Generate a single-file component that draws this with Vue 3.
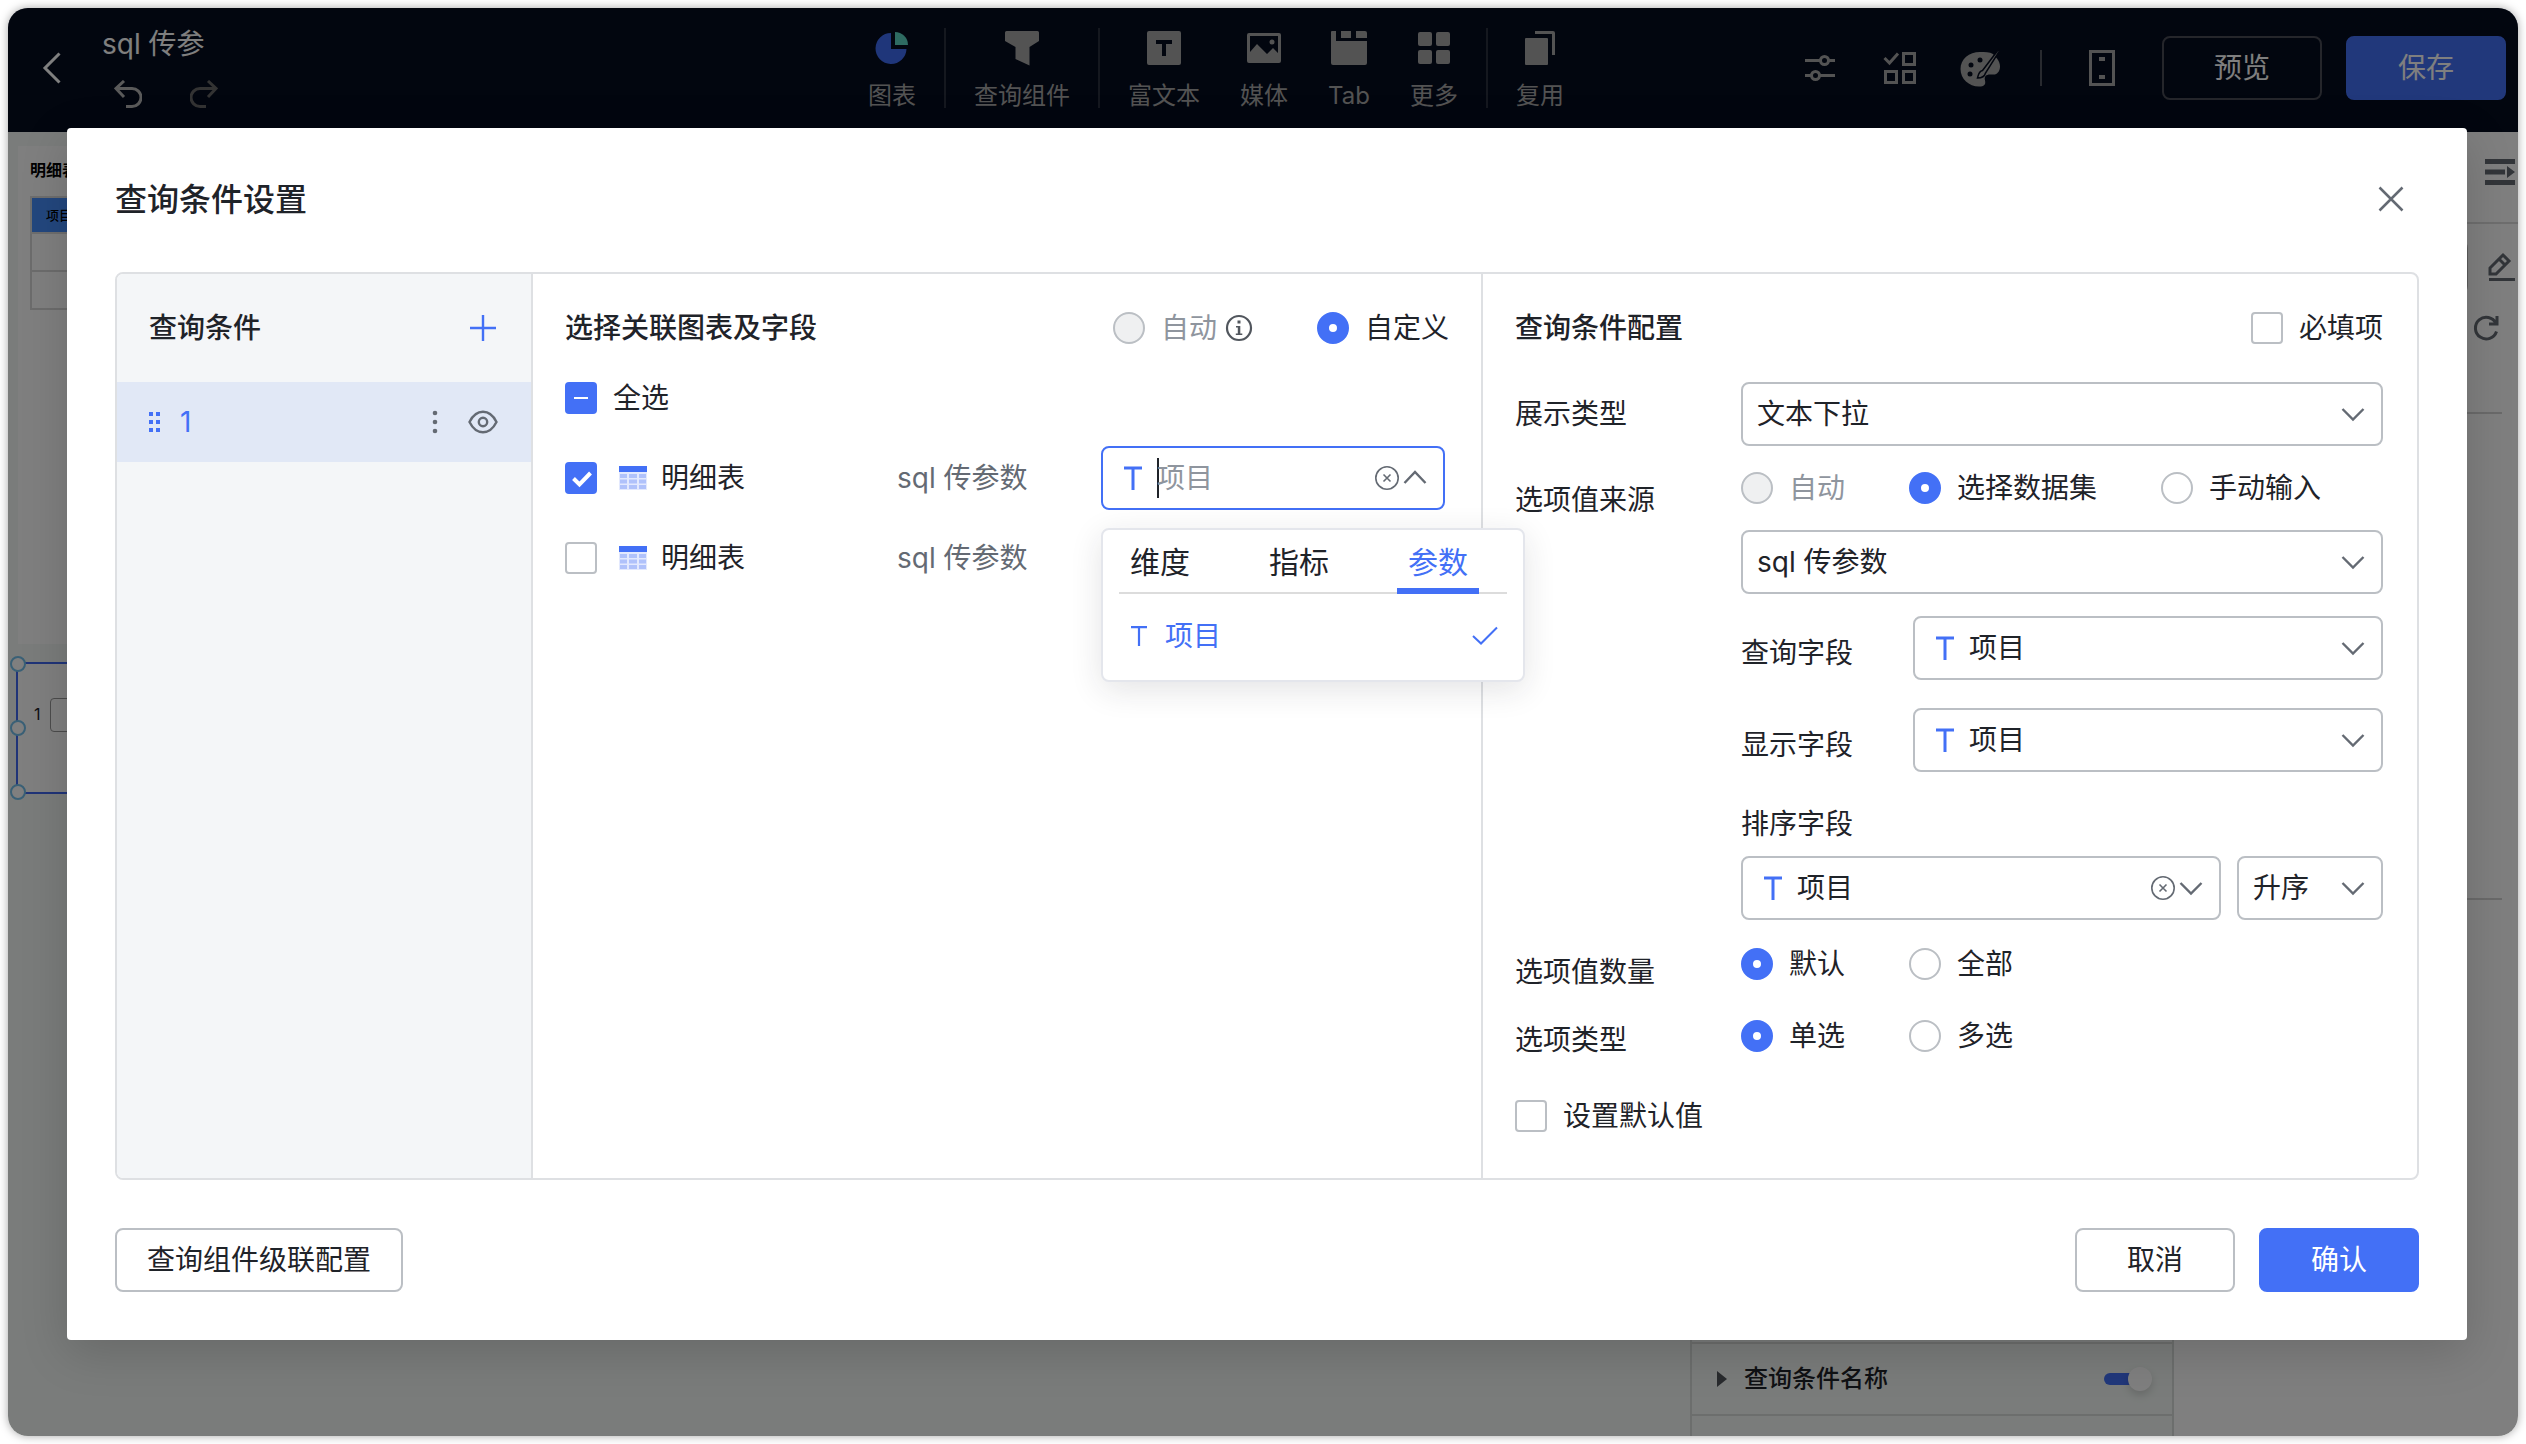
<script setup>
import { ref } from 'vue'

const title = 'sql 传参'
const fieldTabs = ['维度', '指标', '参数']
const activeTab = ref('参数')
const linkMode = ref('custom')
const optionSource = ref('dataset')
const optionAmount = ref('default')
const optionKind = ref('single')
const charts = ref([
  { id: 1, name: '明细表', dataset: 'sql 传参数', checked: true, open: true },
  { id: 2, name: '明细表', dataset: 'sql 传参数', checked: false, open: false }
])
const keyword = ref('')
const required = ref(false)
const useDefault = ref(false)
</script>

<template>
  <div class="frame">
    <div class="page">
      <header class="topbar">
        <div class="topbar-left">
          <button class="icon-btn" aria-label="返回">
            <svg width="32" height="40" viewBox="0 0 32 40"><path d="M23.500 5.500 9 20l14.500 14.500" fill="none" stroke="#fff" stroke-width="3" /></svg>
          </button>
          <div class="doc">
            <div class="doc-title">{{ title }}</div>
            <div class="history">
              <button class="icon-btn undo" aria-label="撤销">
                <svg width="28" height="28" viewBox="0 0 28 28"><path d="M10 1 2 8.500 10 17M3 8.500h15a9 9 0 0 1 0 18h-6" /></svg>
              </button>
              <button class="icon-btn redo" aria-label="重做">
                <svg width="28" height="28" viewBox="0 0 28 28"><path d="m18 1 8 7.500L18 17M25 8.500H10a9 9 0 0 0 0 18h6" /></svg>
              </button>
            </div>
          </div>
        </div>

        <nav class="tools">
          <button class="tool">
            <svg width="40" height="40" viewBox="0 0 40 40">
              <path d="M19 5A15.500 15.500 0 1 0 34.500 21H19Z" fill="#3f6cf5" />
              <path d="M23 4a13 13 0 0 1 13 13H23Z" fill="#5cd6c4" />
            </svg>
            <span>图表</span>
          </button>
          <i class="bar"></i>
          <button class="tool">
            <svg width="40" height="40" viewBox="0 0 40 40"><path d="M4.500 3h31a1.500 1.500 0 0 1 1.500 1.500V13L27.500 19v18.500L13.500 31V19L3 13V4.500A1.500 1.500 0 0 1 4.500 3Z" /></svg>
            <span>查询组件</span>
          </button>
          <i class="bar"></i>
          <div class="tool-group">
            <button class="tool">
              <svg width="40" height="40" viewBox="0 0 40 40"><path fill-rule="evenodd" d="M5 3h30a2 2 0 0 1 2 2v30a2 2 0 0 1-2 2H5a2 2 0 0 1-2-2V5a2 2 0 0 1 2-2Zm7 9v4h6v12h4V16h6v-4Z" /></svg>
              <span>富文本</span>
            </button>
            <button class="tool">
              <svg width="40" height="40" viewBox="0 0 40 40">
                <path fill-rule="evenodd" d="M5 5h30a2 2 0 0 1 2 2v26a2 2 0 0 1-2 2H5a2 2 0 0 1-2-2V7a2 2 0 0 1 2-2Zm1 3v16l7-8 10 10 6-6 5 5V8Z" />
                <circle cx="28" cy="14" r="2.500" />
              </svg>
              <span>媒体</span>
            </button>
            <button class="tool">
              <svg width="40" height="40" viewBox="0 0 40 40"><path d="M3 3h4v10h31v22a2 2 0 0 1-2 2H4a2 2 0 0 1-2-2V4a1 1 0 0 1 1-1ZM12 3h10v7H12ZM27 3h9a2 2 0 0 1 2 2v5H27Z" /></svg>
              <span>Tab</span>
            </button>
            <button class="tool">
              <svg width="40" height="40" viewBox="0 0 40 40">
                <rect x="4" y="4" width="14" height="14" rx="2" /><rect x="22" y="4" width="14" height="14" rx="2" />
                <rect x="4" y="22" width="14" height="14" rx="2" /><rect x="22" y="22" width="14" height="14" rx="2" />
              </svg>
              <span>更多</span>
            </button>
          </div>
          <i class="bar"></i>
          <button class="tool">
            <svg width="40" height="40" viewBox="0 0 40 40"><rect x="5" y="10" width="23" height="27" rx="1" /><path d="M15 3h18a2 2 0 0 1 2 2v22h-3V6H15Z" /></svg>
            <span>复用</span>
          </button>
        </nav>

        <div class="topbar-right">
          <button class="icon-btn" aria-label="全局参数">
            <svg width="40" height="40" viewBox="0 0 40 40" fill="none" stroke="#a6a6a6" stroke-width="3"><path d="M5 12.500h15m9 0h6M5 27.500h6m9 0h15" /><circle cx="24.500" cy="12.500" r="4" /><circle cx="15.500" cy="27.500" r="4" /></svg>
          </button>
          <button class="icon-btn" aria-label="批量操作">
            <svg width="40" height="40" viewBox="0 0 40 40" fill="none" stroke="#a6a6a6" stroke-width="3"><path d="m4.500 10 5 5 8.500-9.500" /><rect x="23.500" y="5.500" width="11" height="11" /><rect x="5.500" y="23.500" width="11" height="11" /><rect x="23.500" y="23.500" width="11" height="11" /></svg>
          </button>
          <button class="icon-btn" aria-label="主题样式">
            <svg width="40" height="40" viewBox="0 0 40 40">
              <path d="M20 4C9 4 .500 11 .500 21S9 38.500 19 38.500c5 0 7-2 6-6-1-4 1-6 5-6h5c3-1 5-4 5-8 0-3-1-5-3-8L33 6C29.500 4 25 4 20 4Z" fill="#a6a6a6" />
              <g fill="#050c1e"><circle cx="10" cy="26" r="2.500" /><circle cx="11" cy="17" r="2.500" /><circle cx="20" cy="12" r="2.500" /></g>
              <path d="M38.500 1.500 22.500 22.500c-4 1-4 4-5 7.500 4 0 7-1 8-5L39.500 3Z" fill="#a6a6a6" stroke="#050c1e" stroke-width="1.500" />
            </svg>
          </button>
          <i class="mini-bar"></i>
          <button class="icon-btn" aria-label="移动端">
            <svg width="40" height="40" viewBox="0 0 40 40"><rect x="8.500" y="3.500" width="23" height="33" fill="none" stroke="#a6a6a6" stroke-width="3" /><path d="M17 9h6v4h-6zm0 18h6v4h-6z" fill="#a6a6a6" /></svg>
          </button>
          <div class="actions">
            <button class="btn dark">预览</button>
            <button class="btn primary">保存</button>
          </div>
        </div>
      </header>

      <div class="workspace">
        <main class="canvas">
          <section class="card">
            <h3>明细表</h3>
            <table class="detail">
              <thead><tr><th>项目</th></tr></thead>
              <tbody><tr><td></td></tr><tr><td></td></tr></tbody>
            </table>
          </section>
          <section class="widget">
            <i class="handle top"></i><i class="handle mid"></i><i class="handle bottom"></i>
            <label for="widget-query">1</label>
            <input id="widget-query" type="text" />
          </section>
        </main>
        <aside class="props">
          <div class="prop-row">
            <svg width="12" height="16" viewBox="0 0 12 16"><path d="M1 0 11 8 1 16Z" fill="#51555b" /></svg>
            <label for="show-name">查询条件名称</label>
            <input id="show-name" type="checkbox" class="switch" checked />
          </div>
          <div class="prop-tail"></div>
        </aside>
        <aside class="fields">
          <div class="fields-head">
            <svg width="30" height="28" viewBox="0 0 30 28" fill="#646a73"><path d="M0 1h30v5H0zM0 11.500h20v5H0zM0 22h30v5H0zM22 8l8 6-8 6z" /></svg>
          </div>
          <div class="fields-set">
            <input type="text" aria-label="数据集" />
            <svg width="30" height="30" viewBox="0 0 30 30" fill="none" stroke="#646a73" stroke-width="3"><path d="M3 27.500h26M4 16 17 3l6 6-13 13H4ZM13 7l6 6" /></svg>
          </div>
          <div class="fields-refresh">
            <svg width="28" height="28" viewBox="0 0 28 28" fill="none" stroke="#646a73" stroke-width="3"><path d="M24.500 17.500A10.800 10.800 0 1 1 24 9.500M25 2v8h-8" /></svg>
          </div>
          <hr class="line-a" />
          <hr class="line-b" />
        </aside>
      </div>
    </div>

    <div class="mask">
      <div class="modal" role="dialog" aria-labelledby="modal-title">
        <header class="modal-head">
          <h2 id="modal-title">查询条件设置</h2>
          <button class="close" aria-label="关闭">
            <svg width="28" height="28" viewBox="0 0 28 28"><path d="m2.500 2.500 23 23m0-23-23 23" fill="none" stroke="#646a73" stroke-width="2.500" /></svg>
          </button>
        </header>

        <div class="panel">
          <section class="col-list">
            <div class="list-head">
              <h3>查询条件</h3>
              <button class="icon-btn" aria-label="添加">
                <svg width="32" height="32" viewBox="0 0 32 32"><path d="M16 3v26M3 16h26" stroke="#4370f6" stroke-width="2.400" /></svg>
              </button>
            </div>
            <div class="list-item">
              <svg width="12" height="20" viewBox="0 0 12 20" fill="#4370f6"><path d="M0 0h4v4H0zM7 0h4v4H7zM0 8h4v4H0zM7 8h4v4H7zM0 16h4v4H0zM7 16h4v4H7z" /></svg>
              <span class="item-name">1</span>
              <button class="icon-btn" aria-label="更多操作">
                <svg width="32" height="32" viewBox="0 0 32 32" fill="#646a73"><circle cx="16" cy="7" r="2.300" /><circle cx="16" cy="16" r="2.300" /><circle cx="16" cy="25" r="2.300" /></svg>
              </button>
              <button class="icon-btn" aria-label="显示">
                <svg width="32" height="32" viewBox="0 0 32 32" fill="none" stroke="#646a73" stroke-width="2.400"><path d="M2.500 16C6 9 10.500 5.800 16 5.800S26 9 29.500 16C26 23 21.500 26.200 16 26.200S6 23 2.500 16Z" /><circle cx="16" cy="16" r="4.200" /></svg>
              </button>
            </div>
          </section>

          <section class="col-charts">
            <div class="section-head">
              <h3>选择关联图表及字段</h3>
              <div class="radios">
                <label class="choice off">
                  <input v-model="linkMode" type="radio" name="link" value="auto" disabled />自动
                  <svg class="info" width="28" height="28" viewBox="0 0 28 28"><circle cx="14" cy="14" r="12" fill="none" stroke="#51565d" stroke-width="2.200" /><path d="M12.500 6.500h3v3h-3zM11 12h4.300v7.500h2V21h-6.500v-1.500h2V13.500H11z" fill="#51565d" /></svg>
                </label>
                <label class="choice"><input v-model="linkMode" type="radio" name="link" value="custom" />自定义</label>
              </div>
            </div>
            <label class="choice all-row"><input type="checkbox" :indeterminate="true" />全选</label>
            <div v-for="chart in charts" :key="chart.id" class="chart-row">
              <label class="choice chart-name">
                <input v-model="chart.checked" type="checkbox" />
                <svg width="28" height="24" viewBox="0 0 28 24">
                  <path d="M0 0h28v24H0z" fill="#e3e9fe" /><path d="M0 0h28v6H0z" fill="#4370f6" />
                  <path d="M1 8h7v4H1zM10 8h8v4h-8zM20 8h7v4h-7zM1 13.500h7v4H1zM10 13.500h8v4h-8zM20 13.500h7v4h-7zM1 19h7v4H1zM10 19h8v4h-8zM20 19h7v4h-7z" fill="#b0c2fb" />
                </svg>
                <span>{{ chart.name }}</span>
              </label>
              <span class="dataset">{{ chart.dataset }}</span>
              <div v-if="chart.open" class="picker">
                <div class="box active with-icon">
                  <svg class="t" width="24" height="24" viewBox="0 0 24 24"><path d="M3 2h18M12 2v22" fill="none" stroke="#4370f6" stroke-width="3" /></svg>
                  <i class="caret"></i>
                  <input v-model="keyword" type="text" placeholder="项目" aria-label="关联字段" />
                  <svg class="clear" width="24" height="24" viewBox="0 0 24 24"><circle cx="12" cy="12" r="11.200" /><path d="m8.500 8.500 7 7m0-7-7 7" /></svg>
                  <svg class="arrow" width="24" height="24" viewBox="0 0 24 24"><path d="m1.500 17 10.500-11 10.500 11" /></svg>
                </div>
                <div class="popup">
                  <div class="tabs" role="tablist">
                    <button v-for="tab in fieldTabs" :key="tab" role="tab" :class="['tab', { on: tab === activeTab }]" @click="activeTab = tab">{{ tab }}</button>
                  </div>
                  <button class="option">
                    <svg width="16" height="20" viewBox="0 0 16 20"><path d="M0 1.200h16M8 1v19" fill="none" stroke="#4370f6" stroke-width="2.200" /></svg>
                    <span>项目</span>
                    <svg width="26" height="20" viewBox="0 0 26 20"><path d="m1 10 8 7.500L25 1.500" fill="none" stroke="#4370f6" stroke-width="2" /></svg>
                  </button>
                </div>
              </div>
            </div>
          </section>

          <section class="col-config">
            <div class="section-head">
              <h3>查询条件配置</h3>
              <label class="choice"><input v-model="required" type="checkbox" />必填项</label>
            </div>

            <div class="form-row center">
              <label for="show-type">展示类型</label>
              <div class="box">
                <select id="show-type"><option>文本下拉</option></select>
                <svg class="arrow" width="24" height="24" viewBox="0 0 24 24"><path d="m1.500 7 10.500 10.500L22.500 7" /></svg>
              </div>
            </div>

            <div class="form-row source">
              <span class="form-label">选项值来源</span>
              <div>
                <div class="radios">
                  <label class="choice off"><input v-model="optionSource" type="radio" name="source" value="auto" disabled />自动</label>
                  <label class="choice"><input v-model="optionSource" type="radio" name="source" value="dataset" />选择数据集</label>
                  <label class="choice"><input v-model="optionSource" type="radio" name="source" value="manual" />手动输入</label>
                </div>
                <div class="box dataset-box">
                  <select aria-label="数据集"><option>sql 传参数</option></select>
                  <svg class="arrow" width="24" height="24" viewBox="0 0 24 24"><path d="m1.500 7 10.500 10.500L22.500 7" /></svg>
                </div>
                <div class="sub-row first">
                  <label for="query-field">查询字段</label>
                  <div class="box with-icon">
                    <svg class="t" width="24" height="24" viewBox="0 0 24 24"><path d="M3 2h18M12 2v22" fill="none" stroke="#4370f6" stroke-width="3" /></svg>
                    <select id="query-field"><option>项目</option></select>
                    <svg class="arrow" width="24" height="24" viewBox="0 0 24 24"><path d="m1.500 7 10.500 10.500L22.500 7" /></svg>
                  </div>
                </div>
                <div class="sub-row">
                  <label for="show-field">显示字段</label>
                  <div class="box with-icon">
                    <svg class="t" width="24" height="24" viewBox="0 0 24 24"><path d="M3 2h18M12 2v22" fill="none" stroke="#4370f6" stroke-width="3" /></svg>
                    <select id="show-field"><option>项目</option></select>
                    <svg class="arrow" width="24" height="24" viewBox="0 0 24 24"><path d="m1.500 7 10.500 10.500L22.500 7" /></svg>
                  </div>
                </div>
                <label class="sort-label" for="sort-field">排序字段</label>
                <div class="sort-row">
                  <div class="box with-icon">
                    <svg class="t" width="24" height="24" viewBox="0 0 24 24"><path d="M3 2h18M12 2v22" fill="none" stroke="#4370f6" stroke-width="3" /></svg>
                    <select id="sort-field"><option>项目</option></select>
                    <svg class="clear" width="24" height="24" viewBox="0 0 24 24"><circle cx="12" cy="12" r="11.200" /><path d="m8.500 8.500 7 7m0-7-7 7" /></svg>
                    <svg class="arrow" width="24" height="24" viewBox="0 0 24 24"><path d="m1.500 7 10.500 10.500L22.500 7" /></svg>
                  </div>
                  <div class="box order">
                    <select aria-label="排序方式"><option>升序</option></select>
                    <svg class="arrow" width="24" height="24" viewBox="0 0 24 24"><path d="m1.500 7 10.500 10.500L22.500 7" /></svg>
                  </div>
                </div>
              </div>
            </div>

            <div class="form-row amount">
              <span class="form-label">选项值数量</span>
              <div class="radios">
                <label class="choice"><input v-model="optionAmount" type="radio" name="amount" value="default" />默认</label>
                <label class="choice"><input v-model="optionAmount" type="radio" name="amount" value="all" />全部</label>
              </div>
            </div>
            <div class="form-row kind">
              <span class="form-label">选项类型</span>
              <div class="radios">
                <label class="choice"><input v-model="optionKind" type="radio" name="kind" value="single" />单选</label>
                <label class="choice"><input v-model="optionKind" type="radio" name="kind" value="multi" />多选</label>
              </div>
            </div>
            <label class="choice default-row"><input v-model="useDefault" type="checkbox" />设置默认值</label>
          </section>
        </div>

        <footer class="modal-foot">
          <button class="btn cascade">查询组件级联配置</button>
          <div class="actions">
            <button class="btn">取消</button>
            <button class="btn primary">确认</button>
          </div>
        </footer>
      </div>
    </div>
  </div>
</template>

<style>
body {
  background: #fff;
}
</style>

<style scoped>
* {
  box-sizing: border-box;
}
.frame {
  display: grid;
  min-height: calc(100vh - 16px);
  margin: 8px;
  border-radius: 20px;
  overflow: hidden;
  box-shadow: 0 0 10px rgba(0, 0, 0, 0.35);
  font: 400 28px/44px Inter, "Noto Sans CJK SC", sans-serif;
  color: #1f2329;
}
.page,
.mask {
  grid-area: 1 / 1;
  min-width: 0;
}
.page {
  display: flex;
  flex-direction: column;
}
h2,
h3 {
  margin: 0;
  font-weight: 500;
}
h2 {
  padding-top: 2px;
  font-size: 32px;
}
h3 {
  font-size: 28px;
}
svg {
  display: block;
  flex: none;
}
button,
input,
select {
  font: inherit;
  color: inherit;
  margin: 0;
}
button {
  padding: 0;
  border: 0;
  background: none;
  cursor: pointer;
}

/* top bar */
.topbar {
  display: grid;
  grid-template-columns: 832fr auto 942fr;
  align-items: center;
  height: 124px;
  padding: 0 12px 4px 28px;
  background: #050c1e;
}
.topbar-left,
.topbar-right,
.tools,
.tool-group,
.actions,
.history {
  display: flex;
  align-items: center;
}
.topbar-left {
  gap: 34px;
}
.doc-title {
  line-height: 32px;
  color: #fff;
}
.history {
  gap: 48px;
  margin-top: 20px;
  padding-left: 12px;
}
.history svg {
  fill: none;
  stroke: #b4b4b4;
  stroke-width: 3;
}
.history .redo svg {
  stroke: #666;
}
.tools {
  gap: 28px;
}
.tool-group {
  gap: 40px;
}
.tool {
  display: flex;
  flex-direction: column;
  align-items: center;
  gap: 14px;
  padding-top: 2px;
  font-size: 24px;
  line-height: 28px;
  color: #a6a6a6;
  fill: #a6a6a6;
  white-space: nowrap;
}
.bar {
  width: 2px;
  height: 80px;
  background: #2b303e;
}
.mini-bar {
  width: 2px;
  height: 36px;
  background: #50545e;
}
.topbar-right {
  justify-content: flex-end;
  gap: 40px;
}
.actions {
  gap: 24px;
}
.btn {
  min-width: 160px;
  height: 64px;
  border: 2px solid #bbbfc4;
  border-radius: 8px;
  background: #fff;
}
.btn.primary {
  border-color: #4370f6;
  background: #4370f6;
  color: #fff;
}
.btn.dark {
  border-color: #4a4d57;
  background: transparent;
  color: #fff;
}

/* page behind the dialog */
.workspace {
  flex: 1;
  display: flex;
  background: #f4f9f6;
}
.canvas {
  flex: 1;
  padding: 14px 10px 0;
}
.card {
  height: 498px;
  padding: 14px 12px;
  background: #fff;
}
.card h3 {
  font-size: 16px;
  line-height: 20px;
  font-weight: 700;
  color: #000;
}
.detail {
  width: 100%;
  margin-top: 16px;
  border-collapse: collapse;
  font-size: 13px;
  line-height: 20px;
  color: #000;
}
.detail th {
  height: 36px;
  padding: 0 14px;
  text-align: left;
  font-weight: 500;
  background: #478ffd;
  border: 2px solid #ddd;
}
.detail td {
  height: 38px;
  border: 2px solid #d8d8d8;
}
.widget {
  position: relative;
  display: flex;
  align-items: flex-start;
  gap: 9px;
  height: 132px;
  margin: 18px 0 0 -2px;
  padding: 34px 16px;
  border: 2px solid #4068f0;
  background: #fff;
  font-size: 16px;
  line-height: 32px;
}
.widget input {
  flex: 1;
  height: 34px;
  border: 1px solid #999;
  border-radius: 4px;
  background: #fff;
}
.handle {
  position: absolute;
  left: -8px;
  width: 16px;
  height: 16px;
  border: 2px solid #74c0ec;
  border-radius: 50%;
  background: #fff;
}
.handle.top {
  top: -8px;
}
.handle.mid {
  top: 56px;
}
.handle.bottom {
  bottom: -8px;
}
.props {
  width: 484px;
  display: flex;
  flex-direction: column;
  justify-content: flex-end;
  border: solid #d8dcda;
  border-width: 0 2px;
}
.prop-row {
  display: flex;
  align-items: center;
  gap: 16px;
  height: 74px;
  padding: 0 24px;
  border: solid #d8dcda;
  border-width: 2px 0;
  font-size: 24px;
  font-weight: 500;
}
.prop-tail {
  height: 20px;
}
.switch {
  position: relative;
  appearance: none;
  width: 44px;
  height: 12px;
  margin-left: auto;
  border-radius: 6px;
  background: #4370f6;
}
.switch::after {
  content: "";
  position: absolute;
  right: -4px;
  top: -6px;
  width: 24px;
  height: 24px;
  border-radius: 50%;
  background: #fff;
  box-shadow: 0 4px 8px rgba(0, 0, 0, 0.15);
}
.fields {
  width: 344px;
  background: #fff;
}
.fields-head {
  display: flex;
  justify-content: flex-end;
  align-items: center;
  height: 92px;
  padding: 0 3px 10px 0;
  border-bottom: 2px solid #dcdcdc;
}
.fields-set {
  display: flex;
  align-items: center;
  gap: 18px;
  padding: 16px 2px 0 16px;
}
.fields-set input {
  flex: 1;
  min-width: 0;
  height: 54px;
  border: 2px solid #bbb;
  border-radius: 8px;
}
.fields-refresh {
  display: flex;
  justify-content: flex-end;
  margin: 20px 18px 0 0;
}
.fields hr {
  height: 2px;
  margin: 0 16px;
  border: 0;
  background: #d4d4d4;
}
.fields .line-a {
  margin-top: 70px;
}
.fields .line-b {
  margin-top: 484px;
}

/* dialog */
.mask {
  position: relative;
  display: flex;
  padding: 120px 51px 96px 59px;
  background: rgba(0, 0, 0, 0.5);
}
.modal {
  flex: 1;
  min-width: 0;
  display: flex;
  flex-direction: column;
  padding: 48px;
  border-radius: 4px;
  background: #fff;
  box-shadow: 0 12px 48px rgba(0, 0, 0, 0.16);
}
.modal-head,
.modal-foot,
.section-head,
.list-head {
  display: flex;
  align-items: center;
  justify-content: space-between;
}
.close {
  display: flex;
  justify-content: center;
  width: 56px;
}
.panel {
  flex: 1;
  display: grid;
  grid-template-columns: 416px minmax(0, 950fr) minmax(0, 934fr);
  margin: 50px 0 48px;
  border: 2px solid #dee0e3;
  border-radius: 8px;
}
.list-head,
.section-head {
  height: 108px;
}
.col-list {
  border-right: 2px solid #dee0e3;
  border-radius: 6px 0 0 6px;
  background: #f4f6f8;
}
.list-head {
  padding: 0 32px;
}
.list-item {
  display: flex;
  align-items: center;
  gap: 16px;
  height: 80px;
  padding: 0 32px;
  background: #e1e8f6;
}
.item-name {
  flex: 1;
  padding-left: 3px;
  color: #4370f6;
}
.col-charts {
  border-right: 2px solid #dee0e3;
  padding: 0 32px;
}
.radios {
  display: flex;
  gap: 64px;
}
.choice {
  display: flex;
  align-items: center;
  gap: 16px;
  white-space: nowrap;
}
.choice.off {
  color: #8f959e;
}
.info {
  margin-left: -8px;
}
.choice input {
  flex: none;
  appearance: none;
  width: 32px;
  height: 32px;
  border: 2px solid #bbbfc4;
  background: #fff;
}
.choice input[type="radio"] {
  border-radius: 50%;
}
.choice input[type="radio"]:checked {
  border: 12px solid #4370f6;
}
.choice input[type="radio"]:disabled {
  background: #eff0f1;
}
.choice input[type="checkbox"] {
  border-radius: 4px;
}
.choice input[type="checkbox"]:checked,
.choice input[type="checkbox"]:indeterminate {
  border: 0;
  background-color: #4370f6;
}
.choice input[type="checkbox"]:checked {
  background-image: url("data:image/svg+xml,%3Csvg xmlns='http://www.w3.org/2000/svg' viewBox='0 0 32 32'%3E%3Cpath d='M8.500 16.500l6 6L25.500 11' fill='none' stroke='white' stroke-width='4'/%3E%3C/svg%3E");
}
.choice input[type="checkbox"]:indeterminate {
  background-image: url("data:image/svg+xml,%3Csvg xmlns='http://www.w3.org/2000/svg' viewBox='0 0 32 32'%3E%3Cpath d='M9 16h14' stroke='white' stroke-width='2'/%3E%3C/svg%3E");
}
.all-row {
  height: 32px;
  margin-bottom: 24px;
}
.chart-row {
  display: flex;
  align-items: center;
  height: 80px;
}
.chart-name {
  flex: none;
  width: 332px;
  gap: 14px;
}
.chart-name svg {
  margin-left: 8px;
}
.dataset {
  flex: none;
  width: 204px;
  color: #646a73;
}
.picker {
  position: relative;
  flex: 1;
  min-width: 0;
  margin-right: 4px;
}
.box {
  display: flex;
  align-items: center;
  gap: 4px;
  width: 100%;
  min-width: 0;
  height: 64px;
  padding: 0 16px 0 14px;
  border: 2px solid #bbbfc4;
  border-radius: 8px;
  background: #fff;
}
.box.active {
  border-color: #4370f6;
}
.box.with-icon {
  padding-left: 18px;
}
.t {
  margin-right: 8px;
}
.box input,
.box select {
  flex: 1;
  min-width: 0;
  height: 44px;
  padding: 0;
  border: 0;
  outline: 0;
  appearance: none;
  background: transparent;
}
.box input::placeholder {
  color: #8f959e;
  opacity: 1;
}
.caret {
  width: 2px;
  height: 40px;
  margin-right: -6px;
  background: #1f2329;
}
.arrow,
.clear {
  fill: none;
  stroke: #646a73;
  stroke-width: 2.4;
}
.clear {
  stroke-width: 1.6;
}
.popup {
  position: absolute;
  z-index: 2;
  left: 0;
  top: 82px;
  width: 424px;
  padding: 0 16px 12px;
  border: 2px solid #e4e6ec;
  border-radius: 8px;
  background: #fff;
  box-shadow: 0 8px 32px rgba(31, 35, 41, 0.12);
}
.tabs {
  display: flex;
  gap: 57px;
  border-bottom: 2px solid #dcdcdc;
}
.tab {
  width: 82px;
  height: 64px;
  margin-bottom: -2px;
  padding-top: 6px;
  border-bottom: 6px solid transparent;
  font-size: 30px;
}
.tab.on {
  color: #4370f6;
  border-color: #4370f6;
}
.option {
  display: flex;
  align-items: center;
  width: 100%;
  height: 74px;
  padding: 10px 9px 0 12px;
  color: #4370f6;
}
.option span {
  flex: 1;
  padding-left: 18px;
  text-align: left;
}
.col-config {
  padding: 0 34px 32px 32px;
}
.form-row {
  display: grid;
  grid-template-columns: 226px minmax(0, 1fr);
  align-items: start;
}
.form-row.center {
  align-items: center;
}
.source {
  margin-top: 20px;
}
.source .form-label {
  padding-top: 12px;
}
.dataset-box {
  margin-top: 20px;
}
.sub-row {
  display: grid;
  grid-template-columns: 172px minmax(0, 1fr);
  align-items: center;
  margin-top: 28px;
}
.sub-row.first {
  margin-top: 22px;
}
.sub-row label {
  padding-top: 10px;
}
.sort-label {
  display: block;
  margin: 30px 0 10px;
}
.sort-row {
  display: flex;
  gap: 16px;
}
.box.order {
  flex: none;
  width: 146px;
}
.amount {
  margin-top: 22px;
}
.amount .form-label {
  padding-top: 8px;
}
.kind {
  margin-top: 20px;
}
.kind .form-label {
  padding-top: 4px;
}
.default-row {
  margin-top: 32px;
}
.cascade {
  padding: 0 30px;
}
</style>
